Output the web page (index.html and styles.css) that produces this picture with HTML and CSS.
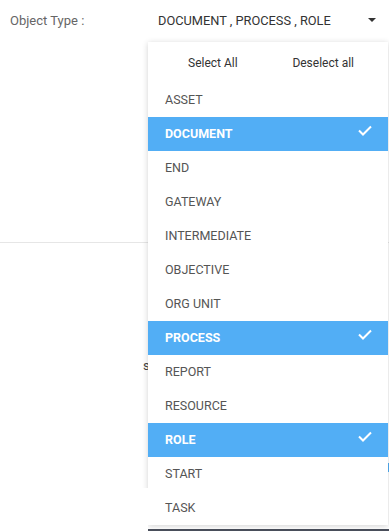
FILE: index.html
```html
<!DOCTYPE html>
<html>
<head>
<meta charset="utf-8">
<link rel="stylesheet" href="styles.css">
</head>
<body>
<div class="page">
  <div class="field">
    <span class="label">Object Type :</span>
    <div class="select">
      <span class="value">DOCUMENT , PROCESS , ROLE</span>
      <svg class="caret" width="8" height="4" viewBox="0 0 8 4"><path d="M0 0H8L4 4Z" fill="#333"/></svg>
    </div>
  </div>
  <div class="divider"></div>
  <div class="peek-text">s</div>
  <div class="peek-blue"></div>
  <div class="bottom-strip"></div>
  <div class="cover"></div>

  <div class="panel">
    <div class="actions">
      <span>Select All</span>
      <span>Deselect all</span>
    </div>
    <ul class="options">
      <li class="option">ASSET</li>
      <li class="option selected">DOCUMENT<svg class="check" width="14" height="11" viewBox="0 0 14 11"><path d="M1 5.5L5 9.5L13 1.5" fill="none" stroke="#fff" stroke-width="2"/></svg></li>
      <li class="option">END</li>
      <li class="option">GATEWAY</li>
      <li class="option">INTERMEDIATE</li>
      <li class="option">OBJECTIVE</li>
      <li class="option">ORG UNIT</li>
      <li class="option selected">PROCESS<svg class="check" width="14" height="11" viewBox="0 0 14 11"><path d="M1 5.5L5 9.5L13 1.5" fill="none" stroke="#fff" stroke-width="2"/></svg></li>
      <li class="option">REPORT</li>
      <li class="option">RESOURCE</li>
      <li class="option selected">ROLE<svg class="check" width="14" height="11" viewBox="0 0 14 11"><path d="M1 5.5L5 9.5L13 1.5" fill="none" stroke="#fff" stroke-width="2"/></svg></li>
      <li class="option">START</li>
      <li class="option">TASK</li>
    </ul>
  </div>
</div>
</body>
</html>
```
FILE: styles.css
```css
html, body {
  margin: 0;
  padding: 0;
  background: #fff;
}
body {
  font-family: Roboto, "Liberation Sans", sans-serif;
  width: 389px;
  height: 531px;
  overflow: hidden;
}
.page {
  position: relative;
  width: 389px;
  height: 531px;
}
.field {
  display: flex;
  align-items: center;
  height: 40px;
}
.label {
  width: 148px;
  padding-left: 10px;
  box-sizing: border-box;
  font-size: 13px;
  color: #666;
}
.select {
  width: 240px;
  display: flex;
  align-items: center;
  justify-content: space-between;
  padding: 0 12px 0 10px;
  box-sizing: border-box;
  font-size: 12.8px;
  color: #333;
}
.caret {
  display: block;
}
.divider {
  margin-top: 202px;
  height: 1px;
  background: #e6e6e6;
}
.peek-text {
  position: absolute;
  left: 143px;
  top: 358px;
  font-size: 13px;
  color: #444;
}
.peek-blue {
  position: absolute;
  left: 380px;
  top: 463px;
  width: 9px;
  height: 9px;
  background: #52aef5;
}
.bottom-strip {
  position: absolute;
  left: 148px;
  top: 529px;
  width: 241px;
  height: 2px;
  background: #4a4f5c;
}
.cover {
  position: absolute;
  left: 0;
  top: 488px;
  width: 148px;
  height: 43px;
  background: #fff;
  z-index: 2;
}
.panel {
  position: absolute;
  left: 148px;
  top: 42px;
  width: 240px;
  background: #fff;
  box-shadow: 0 1px 6px rgba(0, 0, 0, 0.18);
  z-index: 1;
}
.actions {
  display: flex;
  justify-content: space-between;
  align-items: center;
  height: 41px;
  padding: 0 34px 0 40px;
  font-size: 12px;
  color: #333;
}
.options {
  list-style: none;
  margin: 0;
  padding: 0;
}
.option {
  display: flex;
  align-items: center;
  justify-content: space-between;
  height: 34px;
  box-sizing: border-box;
  padding: 0 16px 2px 17px;
  font-size: 12.5px;
  color: #555;
}
.option.selected {
  background: #52aef5;
  color: #fff;
  font-weight: 700;
}
.check {
  display: block;
  margin-top: -5px;
}
```
